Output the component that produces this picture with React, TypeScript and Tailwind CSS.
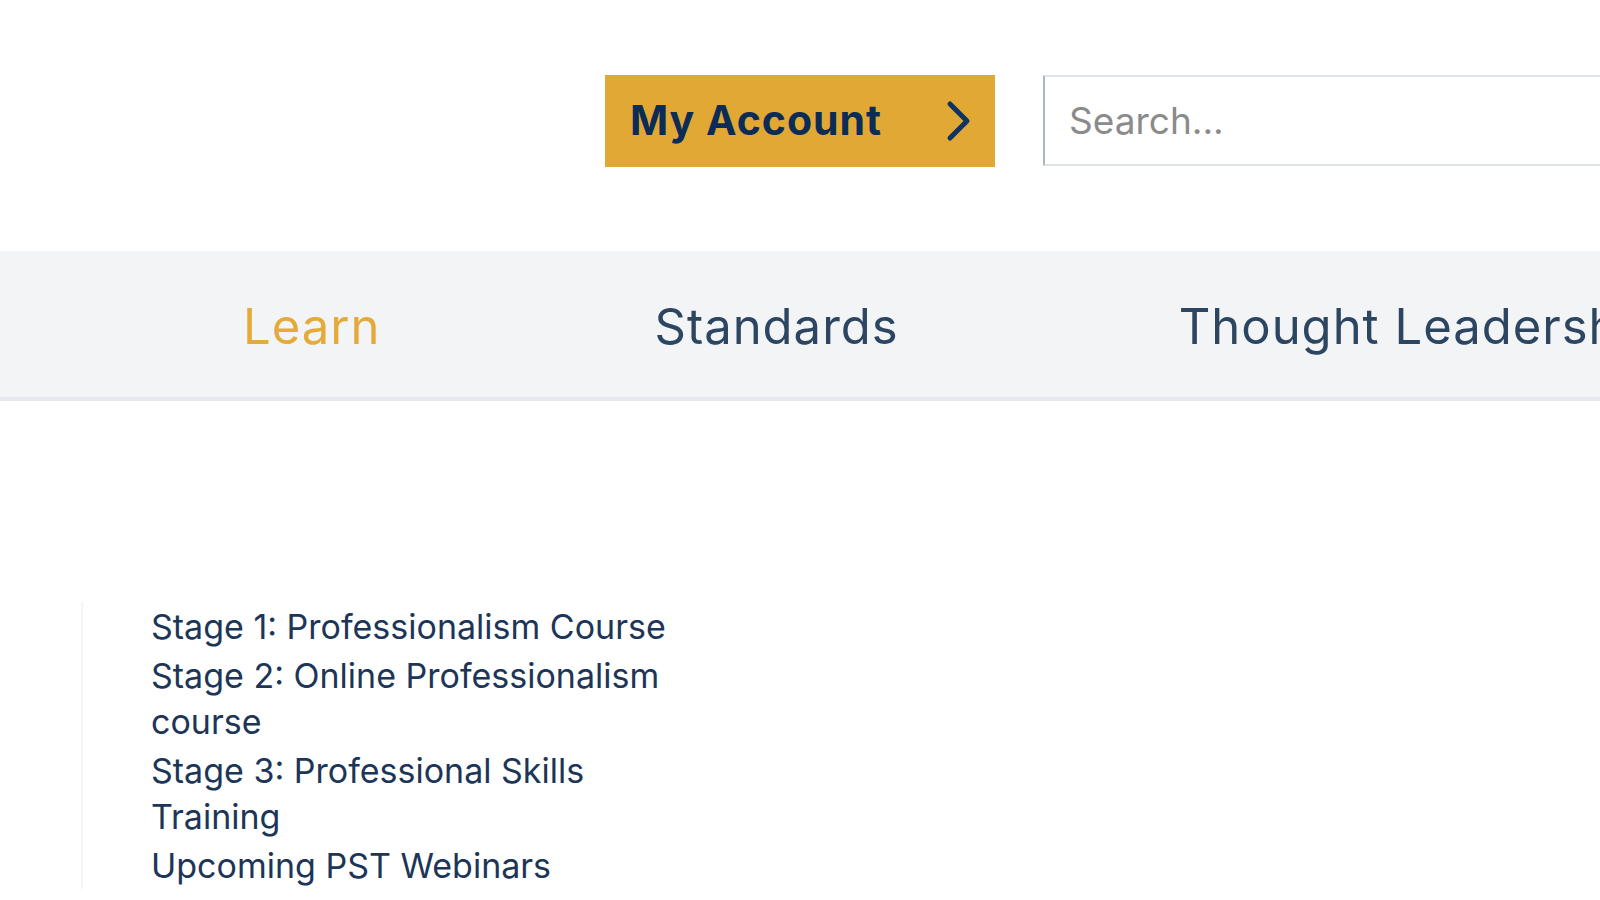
import React from 'react';

const links = [
  'Stage 1: Professionalism Course',
  'Stage 2: Online Professionalism course',
  'Stage 3: Professional Skills Training',
  'Upcoming PST Webinars',
];

export default function App() {
  return (
    <div className="h-[900px] w-[1600px] overflow-hidden bg-white font-['Inter','Liberation_Sans',sans-serif]">
      {/* top bar: account button + search */}
      <div className="flex h-[251px] items-start pt-[75px]">
        <a
          href="#"
          className="ml-[605px] flex h-[92px] w-[390px] items-center justify-between bg-[#e1a933] pl-[25px] pr-[23px] text-[41px] font-bold tracking-[1px] text-[#0c2c58]"
        >
          <span>My Account</span>
          <svg width="26" height="42" viewBox="0 0 26 42" fill="none">
            <path d="M4 4 L21 21 L4 38" stroke="#0e3463" strokeWidth="5" strokeLinecap="round" strokeLinejoin="round" />
          </svg>
        </a>
        <div className="ml-[48px] flex h-[91px] flex-1 items-center border-2 border-r-0 border-[#dde3e9] border-l-[#a9b7c4] pl-[24px]">
          <input
            placeholder="Search..."
            className="w-full bg-transparent text-[37px] text-[#555] outline-none placeholder:text-[#8b8b8b]"
          />
        </div>
      </div>

      {/* main nav */}
      <nav className="flex h-[150px] items-center border-b-[4px] border-[#e5e8ed] bg-[#f3f4f6] pt-[6px] text-[49px] tracking-[1px] text-[#2c4662]">
        <a href="#" className="ml-[243px] text-[#e4ab3a]">Learn</a>
        <a href="#" className="ml-[274px]">Standards</a>
        <a href="#" className="ml-[280px] whitespace-nowrap">Thought Leadership</a>
      </nav>

      {/* sub menu */}
      <div className="ml-[81px] mt-[201px] border-l-2 border-[#f5f5f5] pl-[68px] pt-[2px]">
        <ul className="w-[540px] text-[34px] leading-[46px] text-[#1d3557]">
          {links.map((l) => (
            <li key={l} className="mb-[3px]">
              <a href="#">{l}</a>
            </li>
          ))}
        </ul>
      </div>
    </div>
  );
}
